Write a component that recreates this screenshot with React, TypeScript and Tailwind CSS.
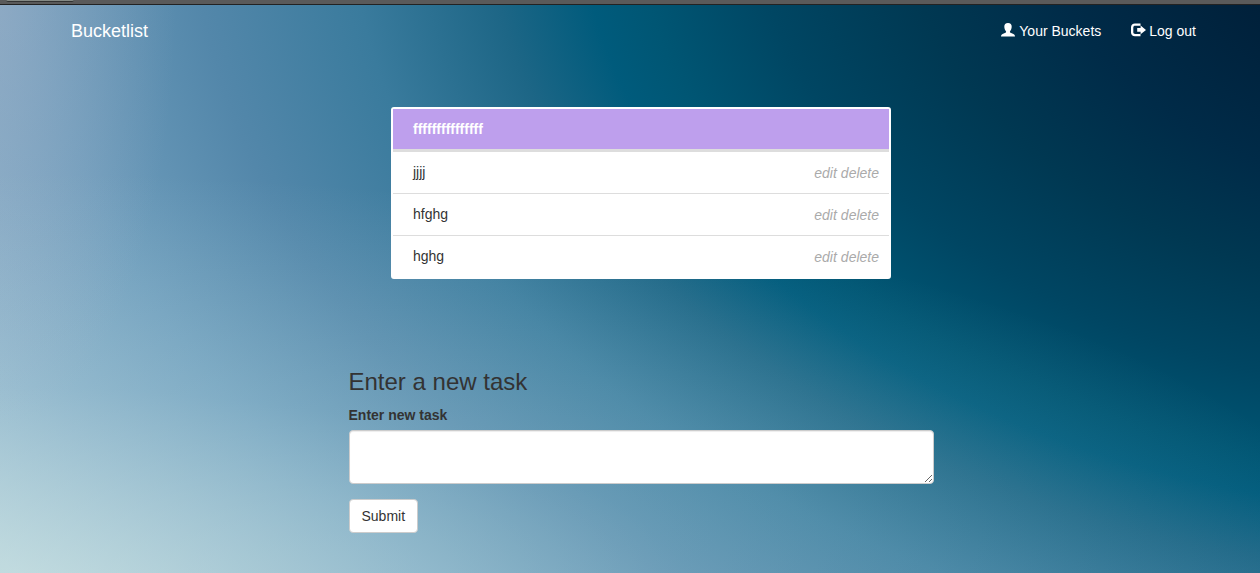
import React from "react";

const tasks = ["jjjj", "hfghg", "hghg"];

function UserIcon() {
  return (
    <svg viewBox="0 0 14 14" className="mb-0.5 h-3.5 w-3.5 fill-current" aria-hidden="true">
      <path d="M7 0C4.5 0 3.2 1.6 3.3 3.8C3.4 5.6 4 7 4.8 8C5.3 8.8 5.2 9.4 4.4 9.8L1.6 11C.5 11.5 0 12.2 0 13.6H14C14 12.2 13.5 11.5 12.4 11L9.6 9.8C8.8 9.4 8.7 8.8 9.2 8C10 7 10.6 5.6 10.7 3.8C10.8 1.6 9.5 0 7 0Z" />
    </svg>
  );
}

function LogOutIcon() {
  return (
    <svg viewBox="0 0 15 14" className="mb-0.5 h-3.5 w-[15px] fill-current" aria-hidden="true">
      <path d="M9.5 0.5H4C1.6 .5 0 2 0 4.2V9.5C0 11.7 1.6 13.2 4 13.2H9.5V11H4.2C3 11 2.3 10.4 2.3 9.3V4.4C2.3 3.3 3 2.7 4.2 2.7H9.5Z" />
      <path d="M9.6 2.6L15 6.9L9.6 11.2V8.8H6.2V5H9.6Z" />
    </svg>
  );
}

export default function App() {
  return (
    <div className="flex min-h-screen flex-col bg-[radial-gradient(14%_75%_at_0%_0%,rgba(185,185,205,0.35),transparent),radial-gradient(110%_75%_at_0%_105%,rgba(215,238,232,0.6),rgba(180,220,225,0.25)_50%,transparent),radial-gradient(920px_615px_at_119%_-100px,#00203a_31%,#002b48_50%,#003852_65%,#004663_81%,#005674_94%,#005b7c_100%,#1d6686_110%,#3a7b9d_125%,#5387aa_142%,#6f9dbc_160%,#8aafc8_177%,#a8c4d4_195%)] font-['Liberation_Sans',Arial,sans-serif] text-sm leading-5 text-[#333]">
      <div className="h-[5px] border-b border-[#222] bg-[#5a5a5a] px-1.5">
        <div className="h-0.5 w-[68px] rounded-b-sm border-b border-[#333] bg-[#858a85]" />
      </div>
      <nav className="mx-auto flex w-full max-w-[1170px] items-center justify-between py-4 pr-[19px] pl-[26px] text-white">
        <a href="#" className="text-lg leading-5">Bucketlist</a>
        <div className="flex gap-[30px]">
          <a href="#buckets" className="flex items-center gap-1"><UserIcon />Your Buckets</a>
          <a href="#logout" className="flex items-center gap-[3px]"><LogOutIcon />Log out</a>
        </div>
      </nav>
      <div className="w-full pl-[22px]">
        <main className="mx-auto w-full max-w-[585px] pt-[50px]">
          <ul className="mx-auto w-full max-w-[500px] rounded-[3px] border-2 border-white bg-white">
            <li className="border-b-[3px] border-[#ddd] bg-[#be9fed] px-5 py-2.5 font-bold text-white">fffffffffffffff</li>
            {tasks.map((task) => (
              <li key={task} className="flex items-end justify-between border-b border-[#ddd] py-2.5 pr-2.5 pl-5 last:border-b-0">
                <span className="leading-[21px]">{task}</span>
                <span className="flex gap-1 leading-5 text-[#aaa] italic">
                  <a href="#edit">edit</a>
                  <a href="#delete">delete</a>
                </span>
              </li>
            ))}
          </ul>
          <form className="flex flex-col items-start pt-[90px]">
            <h3 className="text-2xl leading-[26px]">Enter a new task</h3>
            <label htmlFor="task" className="mt-2.5 mb-[5px] font-bold">Enter new task</label>
            <textarea id="task" className="h-[54px] w-full rounded border border-[#ccc] bg-white px-3 py-1.5 shadow-[inset_0_1px_1px_rgba(0,0,0,0.075)]" />
            <button type="button" className="mt-[15px] rounded border border-[#ccc] bg-white px-3 py-1.5">Submit</button>
          </form>
        </main>
      </div>
    </div>
  );
}
